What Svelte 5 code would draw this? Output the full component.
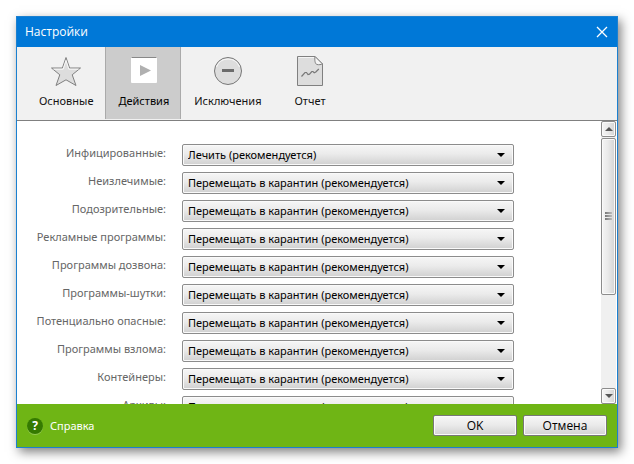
<script lang="ts">
  interface Row {
    id: string;
    label: string;
    value: string;
  }

  const cure = 'Лечить (рекомендуется)';
  const move = 'Перемещать в карантин (рекомендуется)';
  const ignore = 'Игнорировать';

  const tabs = [
    { id: 'main', label: 'Основные' },
    { id: 'actions', label: 'Действия' },
    { id: 'exclusions', label: 'Исключения' },
    { id: 'report', label: 'Отчет' }
  ];

  let active = $state('actions');
  let rows = $state<Row[]>([
    { id: 'infected', label: 'Инфицированные:', value: cure },
    { id: 'incurable', label: 'Неизлечимые:', value: move },
    { id: 'suspicious', label: 'Подозрительные:', value: move },
    { id: 'adware', label: 'Рекламные программы:', value: move },
    { id: 'dialers', label: 'Программы дозвона:', value: move },
    { id: 'jokes', label: 'Программы-шутки:', value: move },
    { id: 'riskware', label: 'Потенциально опасные:', value: move },
    { id: 'hacktools', label: 'Программы взлома:', value: move },
    { id: 'containers', label: 'Контейнеры:', value: move },
    { id: 'archives', label: 'Архивы:', value: move }
  ]);

  let list: HTMLDivElement;

  function scroll(step: number) {
    list.scrollTop += step;
  }
</script>

<div class="desktop">
  <div class="window" role="dialog" aria-labelledby="title">
    <header class="titlebar">
      <span id="title">Настройки</span>
      <button class="close" aria-label="Закрыть">
        <svg width="12" height="12" viewBox="0 0 12 12">
          <path d="M1 1 L11 11 M11 1 L1 11" stroke="#fff" stroke-width="1.3" />
        </svg>
      </button>
    </header>

    <nav class="tabs">
      {#each tabs as tab (tab.id)}
        <button class="tab" class:active={tab.id === active} onclick={() => (active = tab.id)}>
          <svg width="32" height="32" viewBox="0 0 32 32">
            {#if tab.id === 'main'}
              <path
                d="M16 2.500 L19.600 13 L30.500 13 L22.200 19.800 L26 30.500 L16 24.800 L6 30.500 L9.800 19.800 L1.500 13 L12.400 13 Z"
                fill="#ddd" stroke="#808080" stroke-linejoin="round"
              />
              <path d="M3.500 14.200 H13.200 L16 5.500 L18.800 14.200 H28.500" fill="none" stroke="#f8f8f8" />
            {:else if tab.id === 'actions'}
              <rect x="3" y="2" width="26" height="26" rx="1" fill="#fff" />
              <path d="M3.500 2.500 H28.500" stroke="#888" />
              <path d="M12 10 L23 15.500 L12 21 Z" fill="#b0b0b0" />
            {:else if tab.id === 'exclusions'}
              <circle cx="16" cy="16" r="13.500" fill="#ddd" stroke="#777" />
              <path d="M4.500 12 A12.300 12.300 0 0 1 27.500 12" fill="none" stroke="#f8f8f8" />
              <rect x="10" y="14" width="12" height="3" fill="#6c6c6c" />
            {:else}
              <path d="M3.500 1.500 H21 L28.500 9 V30.500 H3.500 Z" fill="#ddd" stroke="#808080" stroke-linejoin="round" />
              <path d="M4.500 2.500 H20" stroke="#f5f5f5" />
              <path d="M21 1.500 C20.500 5 21 9 23 9.500 C25 10 27 9.500 28.500 9 Z" fill="#f4f4f4" stroke="#808080" />
              <path
                d="M7.500 21.500 L11 17.500 L12.500 17.500 L14 19.500 L15.500 19.200 L17.800 16.500 L19 16.500 L20.200 17.800 L21.800 17 L24.800 14"
                fill="none" stroke="#787878" stroke-width="1.200"
              />
            {/if}
          </svg>
          <span>{tab.label}</span>
        </button>
      {/each}
    </nav>

    <main class="content">
      <div class="list" bind:this={list}>
        {#each rows as row (row.id)}
          <div class="row">
            <label for={row.id}>{row.label}</label>
            <select id={row.id} bind:value={row.value}>
              {#if row.id === 'infected'}
                <option>{cure}</option>
              {/if}
              <option>{move}</option>
              <option>{ignore}</option>
            </select>
          </div>
        {/each}
      </div>
      <div class="scrollbar">
        <button class="arrow" aria-label="Вверх" onclick={() => scroll(-28)}>
          <svg width="8" height="4" viewBox="0 0 8 4"><path d="M0 4 L4 0 L8 4 Z" fill="#555" /></svg>
        </button>
        <div class="track">
          <div class="thumb"><i></i><i></i><i></i></div>
        </div>
        <button class="arrow" aria-label="Вниз" onclick={() => scroll(28)}>
          <svg width="8" height="4" viewBox="0 0 8 4"><path d="M0 0 L4 4 L8 0 Z" fill="#555" /></svg>
        </button>
      </div>
    </main>

    <footer class="footer">
      <a class="help" href="#help"><span class="mark">?</span>Справка</a>
      <button class="push">OK</button>
      <button class="push">Отмена</button>
    </footer>
  </div>
</div>

<style>
  :global(body) {
    background: #fff;
  }

  .desktop {
    display: flex;
    box-sizing: border-box;
    height: 100vh;
    padding: 16px;
    font-family: 'Noto Sans', 'Open Sans', sans-serif;
    font-size: 11px;
    line-height: 16px;
    color: #111;
  }

  .window {
    flex: 1;
    display: flex;
    flex-direction: column;
    min-width: 0;
    border: 1px solid #1b80d0;
    box-shadow: 3px 4px 10px rgba(0, 0, 0, 0.5);
  }

  button,
  select {
    box-sizing: border-box;
    margin: 0;
    font: inherit;
    color: inherit;
  }

  .titlebar {
    display: flex;
    align-items: center;
    justify-content: space-between;
    height: 30px;
    padding: 0 9px 0 8px;
    background: #0078d7;
    color: #fff;
    font-family: 'Open Sans', 'Noto Sans', sans-serif;
    font-size: 12px;
  }

  .close {
    display: flex;
    padding: 0;
    border: 0;
    background: none;
  }

  .tabs {
    display: flex;
    height: 73px;
    padding-left: 9px;
    background: #f1f1f1;
    border-bottom: 1px solid #808080;
  }

  .tab {
    display: flex;
    flex-direction: column;
    align-items: center;
    gap: 6px;
    min-width: 72px;
    height: 72px;
    padding: 8px 11px 0 12px;
    border: 0;
    border-left: 1px solid transparent;
    border-right: 1px solid transparent;
    background: none;
  }

  .tab.active {
    background: #ccc;
    border-color: #aaa;
    color: #000;
  }

  .content {
    flex: 1;
    display: flex;
    min-height: 0;
    padding-right: 1px;
    background: #fff;
  }

  .list {
    flex: 1;
    display: flex;
    flex-direction: column;
    gap: 6px;
    overflow: hidden;
    padding-top: 23px;
  }

  .row {
    flex: none;
    display: grid;
    grid-template-columns: 149px minmax(0, 332px);
    gap: 16px;
    height: 22px;
  }

  .row label {
    line-height: 18px;
    text-align: right;
    color: #666;
  }

  .row select {
    appearance: none;
    height: 22px;
    padding: 0 24px 0 5px;
    border: 1px solid #8c8c8c;
    border-radius: 2px;
    background:
      url("data:image/svg+xml,%3Csvg xmlns='http://www.w3.org/2000/svg' width='8' height='4'%3E%3Cpath d='M0 0H8L4 4Z'/%3E%3C/svg%3E") no-repeat right 8px center,
      linear-gradient(#f6f6f6, #ebebeb 45%, #d0d0d0);
    box-shadow: inset 0 0 0 1px #fafafa;
    color: #000;
  }

  .scrollbar {
    display: flex;
    flex-direction: column;
    width: 15px;
    background: #f0f0f0;
  }

  .arrow,
  .thumb {
    border: 1px solid #8c8c8c;
    border-radius: 2px;
    background: linear-gradient(90deg, #f5f5f5, #eaeaea 45%, #d4d4d4);
    box-shadow: inset 0 0 0 1px #fafafa;
  }

  .arrow {
    display: flex;
    align-items: center;
    justify-content: center;
    height: 16px;
    padding: 0;
  }

  .track {
    flex: 1;
    padding: 1px 0;
  }

  .thumb {
    display: flex;
    flex-direction: column;
    align-items: center;
    justify-content: center;
    gap: 1px;
    box-sizing: border-box;
    height: 63%;
  }

  .thumb i {
    width: 7px;
    height: 2px;
    background: linear-gradient(90deg, #777, #bbb);
  }

  .footer {
    display: flex;
    align-items: center;
    gap: 6px;
    height: 43px;
    padding: 0 10px;
    background: #6fb515;
  }

  .help {
    display: flex;
    align-items: center;
    gap: 7px;
    margin-right: auto;
    color: #fff;
    text-decoration: none;
  }

  .mark {
    width: 16px;
    height: 16px;
    border-radius: 50%;
    background: #357a00;
    box-shadow: 0 1px 0 #93c951;
    font-size: 12px;
    font-weight: 700;
    text-align: center;
  }

  .push {
    width: 84px;
    height: 21px;
    padding: 0;
    border: 1px solid #777;
    border-radius: 2px;
    background: linear-gradient(#f6f6f6, #ebebeb 45%, #d2d2d2);
    box-shadow: inset 0 0 0 1px #fafafa;
    font-family: 'Open Sans', 'Noto Sans', sans-serif;
    font-size: 12px;
    color: #000;
  }
</style>
